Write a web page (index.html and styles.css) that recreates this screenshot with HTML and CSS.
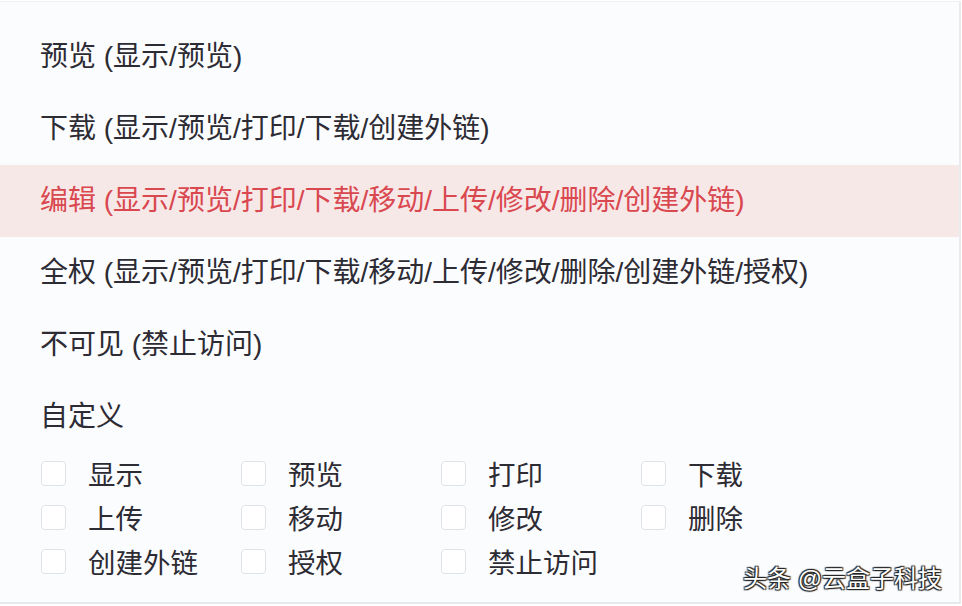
FILE: index.html
```html
<!DOCTYPE html>
<html lang="zh-CN">
<head>
<meta charset="utf-8">
<title>权限</title>
<link rel="stylesheet" href="styles.css">
</head>
<body>
<div class="card">
  <ul class="options">
    <li class="option">预览 (显示/预览)</li>
    <li class="option">下载 (显示/预览/打印/下载/创建外链)</li>
    <li class="option active">编辑 (显示/预览/打印/下载/移动/上传/修改/删除/创建外链)</li>
    <li class="option">全权 (显示/预览/打印/下载/移动/上传/修改/删除/创建外链/授权)</li>
    <li class="option">不可见 (禁止访问)</li>
    <li class="option">自定义</li>
  </ul>
  <div class="checks">
    <label class="check"><span class="box"></span><span class="lbl">显示</span></label>
    <label class="check"><span class="box"></span><span class="lbl">预览</span></label>
    <label class="check"><span class="box"></span><span class="lbl">打印</span></label>
    <label class="check"><span class="box"></span><span class="lbl">下载</span></label>
    <label class="check"><span class="box"></span><span class="lbl">上传</span></label>
    <label class="check"><span class="box"></span><span class="lbl">移动</span></label>
    <label class="check"><span class="box"></span><span class="lbl">修改</span></label>
    <label class="check"><span class="box"></span><span class="lbl">删除</span></label>
    <label class="check"><span class="box"></span><span class="lbl">创建外链</span></label>
    <label class="check"><span class="box"></span><span class="lbl">授权</span></label>
    <label class="check"><span class="box"></span><span class="lbl">禁止访问</span></label>
  </div>
  <div class="watermark">头条 @云盒子科技</div>
</div>
</body>
</html>
```

FILE: styles.css
```css
html, body {
  margin: 0;
  padding: 0;
  background: #ffffff;
}
body {
  width: 962px;
  height: 606px;
  overflow: hidden;
  font-family: "Liberation Sans", "Noto Sans CJK SC", sans-serif;
}
.card {
  position: relative;
  box-sizing: border-box;
  width: 962px;
  height: 603px;
  margin: 1px 0 0 -1px;
  border-top: 1px solid #eef0f4;
  border-right: 2px solid #e9ebef;
  border-bottom: 2px solid #e6e8ec;
  background: #fbfcfe;
  padding-top: 19px;
}
.options {
  list-style: none;
  margin: 0;
  padding: 0;
}
.option {
  height: 72px;
  line-height: 72px;
  padding-left: 41px;
  font-size: 28px;
  color: #2d2b33;
  white-space: nowrap;
}
.option.active {
  background: #f7e8e8;
  color: #d9474f;
}
.checks {
  display: grid;
  grid-template-columns: repeat(4, 200px);
  grid-auto-rows: 44px;
  margin-top: -2px;
  padding-left: 42px;
}
.check {
  display: flex;
  align-items: center;
  gap: 22px;
}
.box {
  box-sizing: border-box;
  width: 25px;
  height: 25px;
  border: 1.5px solid #dfe2e8;
  border-radius: 4px;
  background: #ffffff;
  flex: none;
}
.lbl {
  font-size: 27.5px;
  color: #2d2b33;
}
.watermark {
  position: absolute;
  right: 17px;
  bottom: 8px;
  font-size: 24px;
  color: #ffffff;
  text-shadow: 1px 1px 1px #222, -1px -1px 1px #222, 1px -1px 1px #222, -1px 1px 1px #222;
}
```
